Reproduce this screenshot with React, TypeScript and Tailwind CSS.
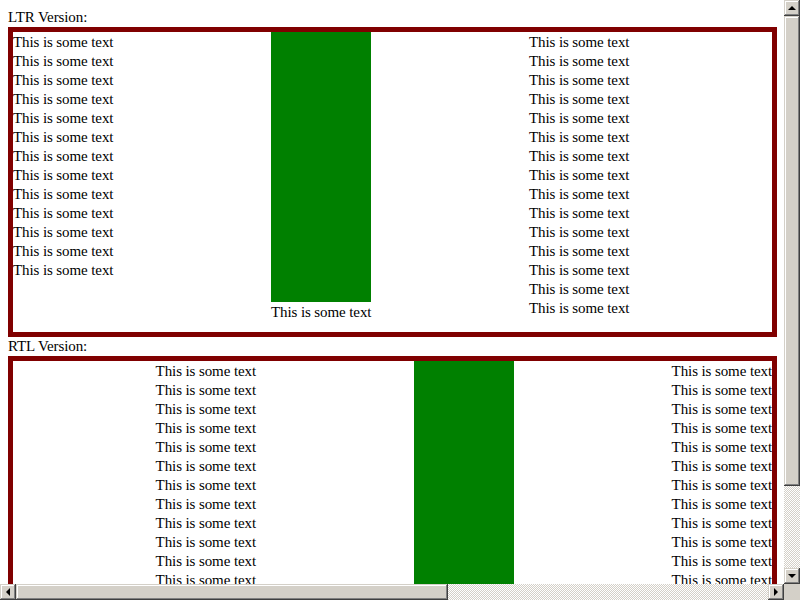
const bevel =
	"bg-[#d4d0c8] shadow-[inset_-1px_-1px_0_#404040,inset_1px_1px_0_#d4d0c8,inset_-2px_-2px_0_#808080,inset_2px_2px_0_#ffffff]";
const track =
	"bg-[repeating-conic-gradient(#d4d0c8_0%_25%,#ffffff_0%_50%)] bg-[length:2px_2px]";

function Lines({ count }: { count: number }) {
	return (
		<>
			{Array.from({ length: count }, (_, i) => (
				<div key={i} className="h-[19px] leading-[21px] whitespace-nowrap">
					This is some text
				</div>
			))}
		</>
	);
}

function Demo({ rtl }: { rtl?: boolean }) {
	return (
		<div
			dir={rtl ? "rtl" : "ltr"}
			className="w-[769px] h-[310px] border-[5px] border-[#800000] grid grid-cols-[243px_243px_243px] gap-x-[15px] overflow-hidden"
		>
			<div>
				<Lines count={13} />
			</div>
			<div>
				<div className="w-[100px] h-[270px] bg-[#008000]" />
				<Lines count={1} />
			</div>
			<div>
				<Lines count={15} />
			</div>
		</div>
	);
}

function Arrow({ dir }: { dir: "up" | "down" | "left" | "right" }) {
	const cls = {
		up: "border-x-[4px] border-x-transparent border-b-[4px] border-b-black",
		down: "border-x-[4px] border-x-transparent border-t-[4px] border-t-black",
		left: "border-y-[4px] border-y-transparent border-r-[4px] border-r-black",
		right: "border-y-[4px] border-y-transparent border-l-[4px] border-l-black",
	}[dir];
	return (
		<div className={`w-[16px] h-[16px] flex items-center justify-center ${bevel}`}>
			<div className={`w-0 h-0 ${cls}`} />
		</div>
	);
}

export default function App() {
	return (
		<div className="w-[800px] h-[600px] grid grid-cols-[784px_16px] grid-rows-[584px_16px] overflow-hidden bg-white">
			<div className="overflow-hidden">
				<div className="p-[8px] w-[785px] font-['Liberation_Serif',serif] text-[15px] leading-[19px] tracking-[-0.1px] text-black">
					<div>LTR Version:</div>
					<Demo />
					<div>RTL Version:</div>
					<Demo rtl />
				</div>
			</div>

			<div className="flex flex-col">
				<Arrow dir="up" />
				<div className={`w-[16px] h-[470px] ${bevel}`} />
				<div className={`flex-1 ${track}`} />
				<Arrow dir="down" />
			</div>

			<div className="flex">
				<Arrow dir="left" />
				<div className={`w-[432px] h-[16px] ${bevel}`} />
				<div className={`flex-1 ${track}`} />
				<Arrow dir="right" />
			</div>

			<div className="bg-[#d4d0c8]" />
		</div>
	);
}
